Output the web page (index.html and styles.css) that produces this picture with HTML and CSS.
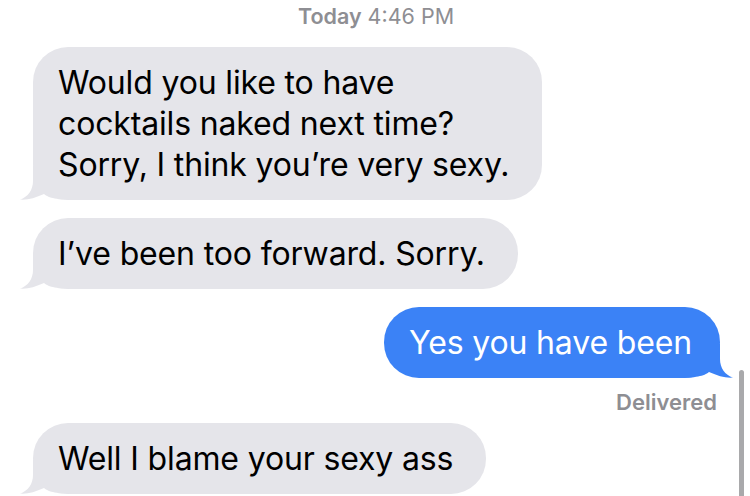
FILE: index.html
```html
<!DOCTYPE html>
<html>
<head>
<meta charset="utf-8">
<link rel="stylesheet" href="styles.css">
</head>
<body>
<div class="thread">
  <div class="stamp"><b>Today</b> 4:46 PM</div>
  <div class="bubble in first">
    <span class="txt">Would you like to have<br>cocktails naked next time?<br>Sorry, I think you’re very sexy.</span>
    <svg class="tail tail-in" width="60" height="34" viewBox="0 0 60 34"><path d="M16 0 L16 15 C16 24 11 31 3 33.6 C10 34.4 18 32 27 28 C32 32 40 34 60 34 L60 0 Z"/></svg>
  </div>
  <div class="bubble in second">
    <span class="txt">I’ve been too forward. Sorry.</span>
    <svg class="tail tail-in" width="60" height="34" viewBox="0 0 60 34"><path d="M16 0 L16 15 C16 24 11 31 3 33.6 C10 34.4 18 32 27 28 C32 32 40 34 60 34 L60 0 Z"/></svg>
  </div>
  <div class="bubble out">
    <span class="txt">Yes you have been</span>
    <svg class="tail tail-out" width="60" height="34" viewBox="0 0 60 34"><path d="M44 0 L44 15 C44 24 49 31 57 33.6 C50 34.4 42 32 33 28 C28 32 20 34 0 34 L0 0 Z"/></svg>
  </div>
  <div class="status">Delivered</div>
  <div class="bubble in last">
    <span class="txt">Well I blame your sexy ass</span>
    <svg class="tail tail-in" width="60" height="34" viewBox="0 0 60 34"><path d="M16 0 L16 15 C16 24 11 31 3 33.6 C10 34.4 18 32 27 28 C32 32 40 34 60 34 L60 0 Z"/></svg>
  </div>
</div>
<div class="scrollbar"></div>
</body>
</html>
```
FILE: styles.css
```css
html, body {
  margin: 0;
  padding: 0;
  background: #ffffff;
  width: 750px;
  height: 496px;
  overflow: hidden;
}
body {
  position: relative;
  font-family: Inter, "Liberation Sans", sans-serif;
}
.thread {
  display: flex;
  flex-direction: column;
  padding-top: 2px;
}
.stamp {
  align-self: center;
  margin-left: 2px;
  font-size: 21.5px;
  line-height: 28px;
  color: #8e8e93;
  font-weight: 400;
}
.stamp b {
  font-weight: 600;
}
.bubble {
  position: relative;
  z-index: 0;
  font-size: 32px;
  line-height: 41px;
  letter-spacing: -0.15px;
  border-radius: 35px;
  padding: 15px 33px 15px 25px;
}
.bubble .txt {
  white-space: nowrap;
}
.in {
  align-self: flex-start;
  margin-left: 33px;
  background: #e5e5ea;
  color: #000000;
  fill: #e5e5ea;
}
.out {
  align-self: flex-end;
  margin-right: 30px;
  padding-right: 28px;
  background: #3b82f6;
  color: #ffffff;
  fill: #3b82f6;
  margin-top: 18px;
}
.first {
  margin-top: 17px;
}
.second {
  margin-top: 18px;
}
.last {
  margin-top: 7px;
}
.tail {
  position: absolute;
  bottom: 0;
  z-index: -1;
}
.tail-in {
  left: -16px;
}
.tail-out {
  right: -16px;
}
.status {
  align-self: flex-end;
  margin-right: 33px;
  margin-top: 10px;
  font-size: 22px;
  line-height: 28px;
  font-weight: 600;
  color: #8e8e93;
}
.scrollbar {
  position: absolute;
  left: 739px;
  top: 370px;
  width: 5px;
  height: 140px;
  border-radius: 3px;
  background: #a9a9ab;
}
```
